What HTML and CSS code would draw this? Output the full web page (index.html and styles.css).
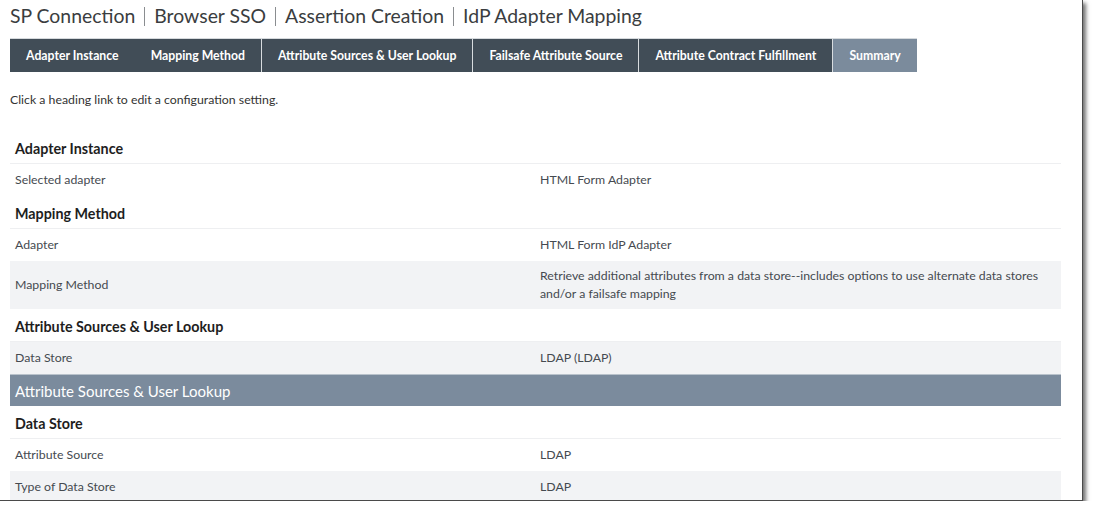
FILE: index.html
```html
<!DOCTYPE html>
<html lang="en">
<head>
<meta charset="utf-8">
<title>IdP Adapter Mapping - Summary</title>
<link rel="stylesheet" href="styles.css">
</head>
<body>
<div class="frame">
  <h1 class="title">
    <span>SP Connection</span><span class="sep"></span><span>Browser SSO</span><span class="sep"></span><span>Assertion Creation</span><span class="sep"></span><span>IdP Adapter Mapping</span>
  </h1>
  <nav class="tabs">
    <div class="tab">Adapter Instance</div>
    <div class="tab">Mapping Method</div>
    <div class="tab">Attribute Sources &amp; User Lookup</div>
    <div class="tab">Failsafe Attribute Source</div>
    <div class="tab">Attribute Contract Fulfillment</div>
    <div class="tab active">Summary</div>
  </nav>
  <p class="hint">Click a heading link to edit a configuration setting.</p>
  <div class="summary">
    <div class="heading">Adapter Instance</div>
    <div class="row"><div class="label">Selected adapter</div><div class="value">HTML Form Adapter</div></div>

    <div class="heading">Mapping Method</div>
    <div class="row"><div class="label">Adapter</div><div class="value">HTML Form IdP Adapter</div></div>
    <div class="row alt multi"><div class="label">Mapping Method</div><div class="value">Retrieve additional attributes from a data store--includes options to use alternate data stores and/or a failsafe mapping</div></div>

    <div class="heading">Attribute Sources &amp; User Lookup</div>
    <div class="row alt"><div class="label">Data Store</div><div class="value">LDAP (LDAP)</div></div>

    <div class="band">Attribute Sources &amp; User Lookup</div>

    <div class="heading">Data Store</div>
    <div class="row"><div class="label">Attribute Source</div><div class="value">LDAP</div></div>
    <div class="row alt"><div class="label">Type of Data Store</div><div class="value">LDAP</div></div>
  </div>
</div>
</body>
</html>
```
FILE: styles.css
```css
html, body {
  margin: 0;
  padding: 0;
  background: #ffffff;
}

body {
  font-family: "Lato", "Liberation Sans", Arial, sans-serif;
  color: #333;
}

.frame {
  box-sizing: border-box;
  width: 1083px;
  height: 501px;
  padding: 5px 0 0 10px;
  border-right: 1px solid #4a4a4a;
  border-bottom: 1px solid #4a4a4a;
  box-shadow: 3px 3px 4px rgba(0, 0, 0, 0.55);
  overflow: hidden;
  background: #fff;
}

.title {
  margin: 0;
  font-size: 19.4px;
  font-weight: 400;
  line-height: 22px;
  color: #3a3d40;
  display: flex;
  align-items: center;
}

.sep {
  display: inline-block;
  width: 1px;
  height: 19px;
  background: #8a8d90;
  margin: 0 9px;
}

.tabs {
  display: inline-flex;
  margin-top: 11px;
  height: 34px;
  background: #414d57;
  border-top: 1px solid #d6dadd;
  box-sizing: border-box;
  vertical-align: top;
}

.tab {
  display: flex;
  align-items: center;
  padding: 0 16px;
  font-size: 12.25px;
  font-weight: 700;
  color: #fff;
  border-left: 1px solid #d8dcdf;
}

.tab:first-child,
.tab:nth-child(2) {
  border-left: none;
}

.tab.active {
  background: #7b8b9c;
}

.hint {
  margin: 20px 0 0;
  font-size: 12.3px;
  line-height: 16px;
  color: #333;
}

.summary {
  margin-top: 23px;
  width: 1051px;
}

.heading {
  box-sizing: border-box;
  height: 33px;
  padding: 3px 0 0 5px;
  display: flex;
  align-items: center;
  font-size: 14.3px;
  font-weight: 700;
  color: #1e1e1e;
  border-bottom: 1px solid #eeeff1;
}

.row {
  display: grid;
  grid-template-columns: 530px 1fr;
  padding: 7px 0;
  font-size: 12.3px;
  line-height: 18px;
  color: #454a50;
  align-items: center;
}

.row.multi {
  padding: 6px 0;
}

.row.alt {
  background: #f2f3f5;
}

.label {
  padding-left: 5px;
}

.value {
  padding-right: 16px;
}

.band {
  height: 32px;
  display: flex;
  align-items: center;
  padding-left: 5px;
  background: #7b8b9d;
  border-top: 1px solid #b9c2cb;
  box-sizing: border-box;
  color: #fff;
  font-size: 15px;
}
```
